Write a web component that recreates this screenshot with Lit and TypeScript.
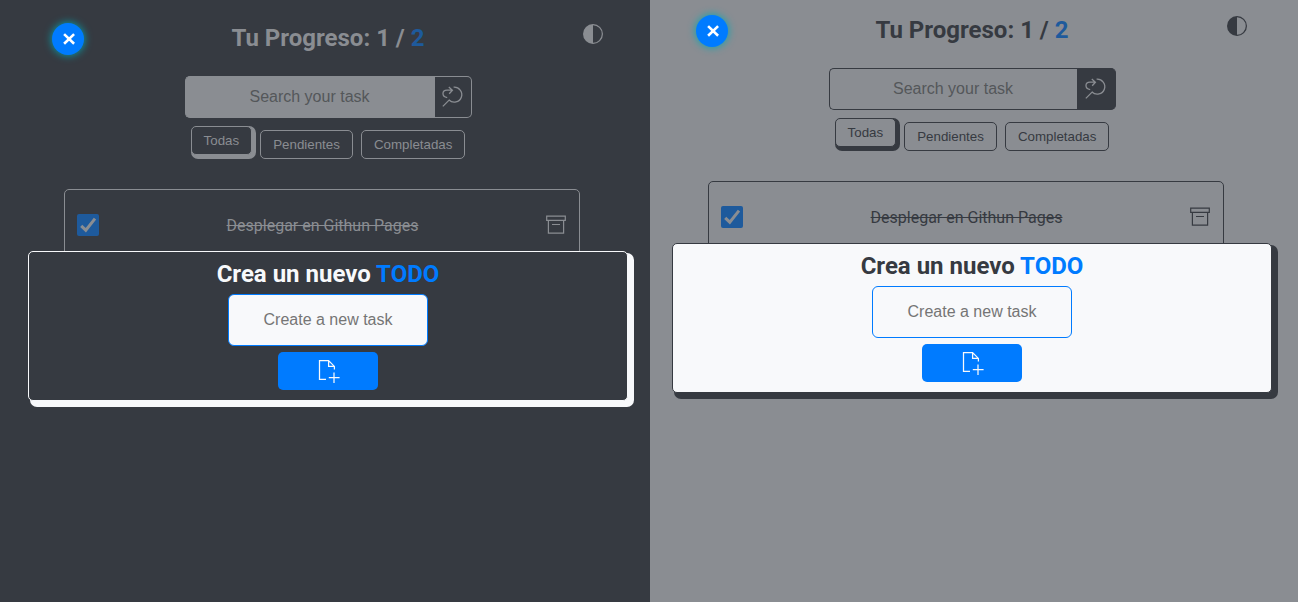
import { LitElement, html, css } from "lit";
import { customElement, property } from "lit/decorators.js";

const halfCircle = html`<svg class="half" width="20" height="20" viewBox="0 0 16 16" fill="currentColor">
  <path d="M8 15A7 7 0 1 0 8 1v14zm0 1A8 8 0 1 1 8 0a8 8 0 0 1 0 16z" />
</svg>`;

const searchIcon = html`<svg width="24" height="24" viewBox="0 0 24 24" fill="none" stroke="currentColor" stroke-width="1.3">
  <path d="M12.6 2.2A7.5 7.5 0 1 1 8 15M8.6 14.6L1.8 21.4M6.2 12.6C.4 11.6.8 5.2 6 5.2H11M7.8 1.9L11.4 5.2L8.2 8.8" />
</svg>`;

const archiveIcon = html`<svg class="archive" width="20" height="20" viewBox="0 0 20 20" fill="none" stroke="currentColor" stroke-width="1.2">
  <path d="M.7 1.2H19.3V5.4H.7zM2.4 5.5V18.2H17.6V5.5M6 9.5H14" />
</svg>`;

const fileIcon = html`<svg width="24" height="24" viewBox="0 0 24 24" fill="none" stroke="currentColor" stroke-width="1.25">
  <path d="M10 20.4H3.5V1.6H12.6L18.4 7.4V10.5M12.6 1.6V7.4H18.4M18 13.5V24M12.8 18.6H23.6" />
</svg>`;

@customElement("todo-pane")
class TodoPane extends LitElement {
  @property({ reflect: true }) theme = "dark";

  static styles = css`
    :host {
      display: block;
      position: relative;
      height: 602px;
      overflow: hidden;
      box-sizing: border-box;
      --pane: #363a41;
      --line: #8a8d92;
      --field: #8a8d92;
      --modal: #363a41;
      --strong: #f8f9fb;
      --search-bg: #363a41;
      --search-line: #8a8d92;
      background: var(--pane);
      color: var(--line);
      font-family: Roboto, sans-serif;
      font-size: 16px;
    }
    :host([theme="light"]) {
      --pane: #8a8d92;
      --line: #363a41;
      --modal: #f8f9fb;
      --strong: #363a41;
      --search-line: #363a41;
    }
    * { box-sizing: border-box; }
    .page {
      width: 656px;
      padding-top: 8px;
      display: flex;
      flex-direction: column;
      align-items: center;
    }
    :host([theme="light"]) .page {
      margin-left: -6px;
      padding-top: 0;
    }
    .head {
      width: 552px;
      height: 68px;
      display: grid;
      grid-template-columns: 32px 1fr 32px;
      align-items: start;
      padding-top: 15px;
    }
    .close {
      width: 32px;
      height: 32px;
      border-radius: 50%;
      background: #007bff;
      color: #fff;
      display: flex;
      align-items: center;
      justify-content: center;
      padding-left: 1px;
      box-shadow: 0 0 8px #00a8b5;
    }
    h2 {
      margin: 0;
      font-size: 24px;
      line-height: 28px;
      font-weight: 700;
      text-align: center;
    }
    .head h2 { padding-top: 1px; }
    .head em { font-style: normal; color: #1e5a9c; }
    .half { margin: 1px 0 0 11px; }
    .search { display: flex; width: 287px; height: 42px; }
    input {
      font: 16px "Liberation Sans", sans-serif;
      text-align: center;
      outline: none;
      margin: 0;
      padding: 0;
    }
    .query {
      width: 250px;
      border: 1px solid var(--line);
      border-right: 0;
      border-radius: 5px 0 0 5px;
      padding-right: 1px;
      background: var(--field);
    }
    .query::placeholder { color: #54575a; }
    .create::placeholder { color: #757575; }
    .go {
      width: 37px;
      border: 1px solid var(--search-line);
      border-left: 0;
      border-radius: 0 5px 5px 0;
      background: var(--search-bg);
      color: #8a8d92;
      display: flex;
      align-items: center;
      justify-content: center;
    }
    :host([theme="light"]) .go { width: 39px; }
    :host([theme="light"]) .query { width: 248px; padding-right: 0; }
    .filters {
      display: flex;
      gap: 8px;
      margin-top: 12px;
    }
    .filter {
      height: 29px;
      padding: 0 12px;
      border: 1px solid var(--line);
      border-radius: 5px;
      background: var(--pane);
      color: var(--line);
      font: 13.333px "Liberation Sans", sans-serif;
    }
    .active {
      transform: translateY(-4px);
      box-shadow: 2px 2px 0 2px var(--line);
    }
    .task {
      width: 516px;
      height: 72px;
      margin: 30px 12px 0 0;
      padding: 0 13px 0 12px;
      border: 1px solid var(--line);
      border-radius: 5px;
      display: grid;
      grid-template-columns: 22px 1fr 20px;
      align-items: center;
    }
    .check {
      width: 22px;
      height: 22px;
      border-radius: 2px;
      background: #1e5a9c;
      color: #8a8d92;
    }
    .check svg { display: block; }
    .label { text-align: center; text-decoration: line-through; }
    .modal {
      position: absolute;
      left: 28px;
      top: 251px;
      width: 600px;
      height: 150px;
      padding-top: 8px;
      border: 1px solid var(--strong);
      border-radius: 5px;
      background: var(--modal);
      color: var(--strong);
      box-shadow: 4px 4px 0 2px var(--strong);
      display: flex;
      flex-direction: column;
      align-items: center;
    }
    :host([theme="light"]) .modal { left: 22px; top: 243px; }
    .modal em { font-style: normal; color: #007bff; }
    .create {
      width: 200px;
      height: 52px;
      margin-top: 6px;
      border: 1px solid #007bff;
      border-radius: 6px;
      background: #f8f9fb;
    }
    .add {
      width: 100px;
      height: 38px;
      margin-top: 6px;
      padding: 0;
      border: 0;
      border-radius: 5px;
      background: #007bff;
      color: #f8f9fb;
      display: flex;
      align-items: center;
      justify-content: center;
    }
  `;

  render() {
    return html`
      <div class="page">
        <div class="head">
          <div class="close">
            <svg width="12" height="12" viewBox="0 0 12 12" stroke="currentColor" stroke-width="2.6">
              <path d="M1.1 1.1L11.1 10.7M11.1 1.1L1.1 10.7" />
            </svg>
          </div>
          <h2>Tu Progreso: 1 / <em>2</em></h2>
          ${halfCircle}
        </div>
        <div class="search">
          <input class="query" placeholder="Search your task" />
          <div class="go">${searchIcon}</div>
        </div>
        <div class="filters">
          <button class="filter active">Todas</button>
          <button class="filter">Pendientes</button>
          <button class="filter">Completadas</button>
        </div>
        <div class="task">
          <div class="check">
            <svg width="22" height="22" viewBox="0 0 22 22" fill="none" stroke="currentColor" stroke-width="3">
              <path d="M4.2 11.8L8.8 16.2L18 4.6" />
            </svg>
          </div>
          <span class="label">Desplegar en Githun Pages</span>
          ${archiveIcon}
        </div>
      </div>
      <div class="modal">
        <h2>Crea un nuevo <em>TODO</em></h2>
        <input class="create" placeholder="Create a new task" />
        <button class="add">${fileIcon}</button>
      </div>
    `;
  }
}

@customElement("app-root")
class AppRoot extends LitElement {
  static styles = css`
    :host {
      display: grid;
      grid-template-columns: 650px 648px;
      height: 602px;
      overflow: hidden;
    }
  `;

  render() {
    return html`<todo-pane theme="dark"></todo-pane><todo-pane theme="light"></todo-pane>`;
  }
}
